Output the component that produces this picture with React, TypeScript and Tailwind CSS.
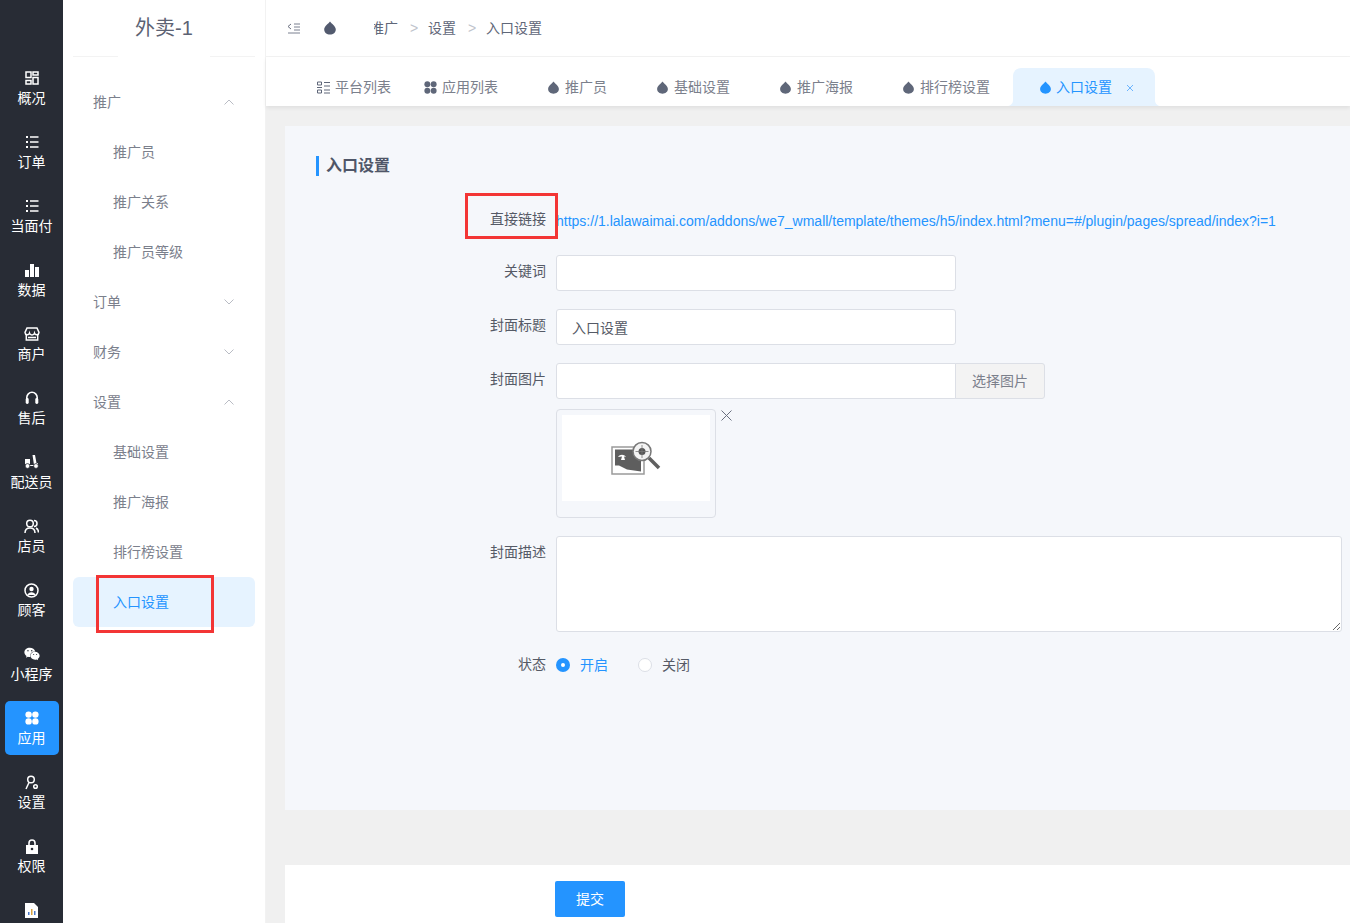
import React from "react";
import { FaWeixin } from "react-icons/fa";

const font = { fontFamily: '"Liberation Sans", "Noto Sans CJK SC", sans-serif' };

function Drop({ c = "#5f6779", s = 14 }: { c?: string; s?: number }) {
  return (
    <svg width={s} height={s} viewBox="0 0 14 14" className="shrink-0">
      <path d="M7 .6C5.6 2.6 1.2 5.4 1.2 8.6 1.2 11.6 3.8 13.6 7 13.6s5.8-2 5.8-5C12.8 5.4 8.4 2.6 7 .6z" fill={c} />
    </svg>
  );
}

function Four({ c = "#fff", s = 14 }: { c?: string; s?: number }) {
  return (
    <svg width={s} height={s} viewBox="0 0 14 14" className="shrink-0">
      <circle cx="3.6" cy="3.6" r="3.2" fill={c} />
      <circle cx="10.4" cy="3.6" r="3.2" fill={c} />
      <circle cx="3.6" cy="10.4" r="3.2" fill={c} />
      <circle cx="10.4" cy="10.4" r="3.2" fill={c} />
    </svg>
  );
}

const stroke = { fill: "none", stroke: "#fff", strokeWidth: 1.5 };

const Dash = () => (
  <svg width="14" height="14" viewBox="0 0 14 14">
    <rect x="1" y="1" width="5" height="5.5" {...stroke} />
    <rect x="8" y="1" width="5" height="3" {...stroke} />
    <rect x="1" y="9.5" width="5" height="3.5" {...stroke} />
    <rect x="8" y="6.5" width="5" height="6.5" {...stroke} />
  </svg>
);
const ListI = () => (
  <svg width="14" height="14" viewBox="0 0 14 14">
    <path d="M1 1h2v2H1zM1 6h2v2H1zM1 11h2v2H1z" fill="#fff" />
    <path d="M5 2h8.5M5 7h8.5M5 12h8.5" {...stroke} />
  </svg>
);
const Bars = () => (
  <svg width="14" height="14" viewBox="0 0 14 14">
    <path d="M0 7h4v7H0zM5 1h4v13H5zM10 4h4v10h-4z" fill="#fff" />
  </svg>
);
const Store = () => (
  <svg width="16" height="14" viewBox="0 0 16 14">
    <path d="M3 1h10l2 4.5a2.3 2.3 0 0 1-4.5.6 2.6 2.6 0 0 1-5 0A2.3 2.3 0 0 1 1 5.500z" {...stroke} />
    <path d="M2.300 7v6h11.400V7M4 10.500h8" {...stroke} />
  </svg>
);
const Head = () => (
  <svg width="14" height="14" viewBox="0 0 14 14">
    <path d="M1.800 8V6.500a5.200 5.200 0 0 1 10.400 0V8" fill="none" stroke="#fff" strokeWidth="1.600" />
    <rect x="0.700" y="7" width="3" height="6" rx="1.400" fill="#fff" />
    <rect x="10.300" y="7" width="3" height="6" rx="1.400" fill="#fff" />
  </svg>
);
const Scooter = () => (
  <svg width="15" height="14" viewBox="0 0 15 14">
    <path d="M1 4h5v5H1zM8.500 0h2.500l1.500 8H14v3H5v-1h5z" fill="#fff" />
    <circle cx="3.500" cy="11" r="2.400" fill="#fff" stroke="#282c35" strokeWidth=".8" />
    <circle cx="12" cy="11" r="2.400" fill="#fff" stroke="#282c35" strokeWidth=".8" />
  </svg>
);
const Users = () => (
  <svg width="15" height="15" viewBox="0 0 15 15">
    <circle cx="6" cy="4.500" r="3.300" {...stroke} />
    <path d="M1 14c0-3 2-5 5-5s5 2 5 5M10 1.500a3 3 0 0 1 0 6M12 9c1.500.8 2.500 2.500 2.500 4.500" {...stroke} />
  </svg>
);
const Person = () => (
  <svg width="15" height="15" viewBox="0 0 15 15">
    <circle cx="7.500" cy="7.500" r="6.500" {...stroke} />
    <circle cx="7.500" cy="6" r="2.200" fill="#fff" />
    <path d="M3.500 12c.6-2 2-2.800 4-2.800s3.400.8 4 2.800z" fill="#fff" />
  </svg>
);
const KeyI = () => (
  <svg width="14" height="15" viewBox="0 0 14 15">
    <circle cx="6" cy="4.500" r="3.300" {...stroke} />
    <path d="M4 7.500 1 14" {...stroke} />
    <circle cx="10.500" cy="11.500" r="1.800" {...stroke} />
  </svg>
);
const Lock = () => (
  <svg width="14" height="15" viewBox="0 0 14 15">
    <path d="M4 6V4a3 3 0 0 1 6 0v2" fill="none" stroke="#fff" strokeWidth="1.600" />
    <rect x="1" y="6" width="12" height="9" fill="#fff" />
    <circle cx="7" cy="10" r="1.300" fill="#282c35" />
  </svg>
);
const Doc = () => (
  <svg width="13" height="15" viewBox="0 0 13 15">
    <path d="M0 0h9l4 4v11H0z" fill="#fff" />
    <path d="M3 9h1.500v3H3z" fill="#4a78c8" />
    <path d="M6 6h1.500v6H6z" fill="#d9a441" />
    <path d="M9 8h1.500v4H9z" fill="#4a78c8" />
  </svg>
);

const rail: [string, React.ReactNode][] = [
  ["概况", <Dash />],
  ["订单", <ListI />],
  ["当面付", <ListI />],
  ["数据", <Bars />],
  ["商户", <Store />],
  ["售后", <Head />],
  ["配送员", <Scooter />],
  ["店员", <Users />],
  ["顾客", <Person />],
  ["小程序", <FaWeixin size={16} color="#fff" />],
  ["应用", <Four />],
  ["设置", <KeyI />],
  ["权限", <Lock />],
  ["", <Doc />],
];

function Chevron({ up }: { up?: boolean }) {
  return (
    <svg width="10" height="6" viewBox="0 0 10 6">
      <path d={up ? "M.5 5.500 5 1l4.500 4.500" : "M.5.500 5 5 9.500.500"} fill="none" stroke="#b9bcc4" strokeWidth="1" />
    </svg>
  );
}

const menu: { t: string; child?: boolean; up?: boolean; down?: boolean; active?: boolean }[] = [
  { t: "推广", up: true },
  { t: "推广员", child: true },
  { t: "推广关系", child: true },
  { t: "推广员等级", child: true },
  { t: "订单", down: true },
  { t: "财务", down: true },
  { t: "设置", up: true },
  { t: "基础设置", child: true },
  { t: "推广海报", child: true },
  { t: "排行榜设置", child: true },
  { t: "入口设置", child: true, active: true },
];

const GridI = () => (
  <svg width="13" height="13" viewBox="0 0 13 13" className="shrink-0">
    <path d="M.5 1h4v3h-4zM.5 9h4v3h-4z" fill="none" stroke="#5f6779" strokeWidth="1" />
    <path d="M7 1.500h6M7 5h6M7 9h6M7 12h6M0 6.500h5" stroke="#5f6779" strokeWidth="1.200" />
  </svg>
);

const tabs: { t: string; icon: React.ReactNode; cls: string }[] = [
  { t: "平台列表", icon: <GridI />, cls: "ml-[51px]" },
  { t: "应用列表", icon: <Four c="#5f6779" s={13} />, cls: "ml-[33px]" },
  { t: "推广员", icon: <Drop s={13} />, cls: "ml-[49px]" },
  { t: "基础设置", icon: <Drop s={13} />, cls: "ml-[49px]" },
  { t: "推广海报", icon: <Drop s={13} />, cls: "ml-[49px]" },
  { t: "排行榜设置", icon: <Drop s={13} />, cls: "ml-[49px]" },
];

function Row({ label, children, cls = "" }: { label: string; children: React.ReactNode; cls?: string }) {
  return (
    <div className={`flex ${cls}`}>
      <div className="w-[230px] text-right text-sm leading-[32px] text-[#555a66] shrink-0">{label}</div>
      <div className="ml-[10px] min-w-0 flex-1">{children}</div>
    </div>
  );
}

const inputCls =
  "block w-[400px] h-[36px] px-[15px] bg-white border border-[#dcdfe6] rounded-[3px] text-sm text-[#555a66] outline-none";

export default function App() {
  return (
    <div className="relative flex h-[923px] w-[1350px] overflow-hidden bg-[#f0f0f0]" style={font}>
      {/* rail */}
      <aside className="w-[63px] shrink-0 bg-[#282c35] pt-[61px] flex flex-col items-center gap-[10px]">
        {rail.map(([t, icon], i) => (
          <div
            key={i}
            className={`w-[54px] h-[54px] shrink-0 rounded-[5px] flex flex-col items-center text-white ${t === "应用" ? "bg-[#2494ff]" : ""}`}
          >
            <div className="h-[16px] mt-[9px] flex items-center justify-center">{icon}</div>
            <div className="text-sm leading-[20px] mt-[2px] whitespace-nowrap">{t}</div>
          </div>
        ))}
      </aside>

      {/* sub sidebar */}
      <aside className="w-[202px] shrink-0 bg-white flex flex-col">
        <div className="relative mx-[10px] h-[57px] shrink-0 border-b border-[#f3f3f3] flex items-center justify-center text-[20px] text-[#5c6273]">
          外卖-1
          <div className="absolute left-[45px] top-[56px] w-[92px] h-[2px] bg-white" />
        </div>
        <nav className="mt-[20px] mx-[10px] flex flex-col">
          {menu.map((m) => (
            <div
              key={m.t + (m.child ? "c" : "")}
              className={`h-[50px] flex items-center justify-between pr-[21px] text-sm rounded-[6px] ${m.child ? "pl-[40px]" : "pl-[20px]"} ${m.active ? "bg-[#e6f3ff] text-[#2494ff]" : "text-[#7b808c]"}`}
            >
              <span>{m.t}</span>
              {m.up && <Chevron up />}
              {m.down && <Chevron />}
            </div>
          ))}
        </nav>
      </aside>

      {/* main */}
      <main className="flex-1 min-w-0 flex flex-col border-l border-[#f2f2f2]">
        <header className="h-[57px] shrink-0 bg-white border-b border-[#f3f3f3] flex items-center text-sm text-[#5f6779]">
          <svg width="14" height="12" viewBox="0 0 14 12" className="ml-[21px] shrink-0">
            <path d="M4 2 1 4.500 4 7" fill="none" stroke="#6a7080" strokeWidth="1" />
            <path d="M7 2h6M7 5h6M7 8h6M1 11h12" stroke="#7a8090" strokeWidth="1" />
          </svg>
          <span className="ml-[22px]">
            <Drop c="#525a6e" s={14} />
          </span>
          <div className="ml-[37px] w-[24px] overflow-hidden flex justify-end whitespace-nowrap">
            <span className="shrink-0">推广</span>
          </div>
          <span className="ml-[12px] text-[#c0c4cc] w-[8px]">&gt;</span>
          <span className="ml-[10px]">设置</span>
          <span className="ml-[12px] text-[#c0c4cc] w-[8px]">&gt;</span>
          <span className="ml-[10px]">入口设置</span>
        </header>

        <div className="relative z-10 h-[49px] shrink-0 bg-white shadow-[0_2px_4px_rgba(0,0,0,0.07)] flex items-end text-sm text-[#7b808c]">
          {tabs.map((x) => (
            <div key={x.t} className={`h-[38px] flex items-center gap-[5px] ${x.cls}`}>
              {x.icon}
              <span className="whitespace-nowrap">{x.t}</span>
            </div>
          ))}
          <div className="relative ml-[23px] w-[142px] h-[38px] rounded-t-[8px] bg-[#e6f3ff] flex items-center pl-[26px] text-[#2494ff]">
            <Drop c="#2494ff" s={13} />
            <span className="ml-[4px] whitespace-nowrap">入口设置</span>
            <svg width="8" height="8" viewBox="0 0 8 8" className="ml-[14px] mt-[2px]">
              <path d="M1 1l6 6M7 1 1 7" stroke="#6bb4ff" strokeWidth="1" />
            </svg>
            <svg width="6" height="6" viewBox="0 0 6 6" className="absolute left-[-6px] bottom-0">
              <path d="M6 0v6H0c3 0 6-2 6-6z" fill="#e6f3ff" />
            </svg>
            <svg width="6" height="6" viewBox="0 0 6 6" className="absolute right-[-6px] bottom-0">
              <path d="M0 0v6h6C3 6 0 4 0 0z" fill="#e6f3ff" />
            </svg>
          </div>
        </div>

        <div className="flex-1 min-h-0 pl-[19px] pt-[20px]">
          <section className="h-[684px] bg-[#f5f7fb] pl-[31px] pt-[30px]">
            <h2 className="h-[20px] border-l-[3px] border-[#2494ff] pl-[7px] text-base leading-[20px] font-bold text-[#4f5668]">
              入口设置
            </h2>

            <Row label="直接链接" cls="mt-[27px] h-[36px]">
              <div className="text-sm leading-[36px] text-[#2494ff] whitespace-nowrap">
                https://1.lalawaimai.com/addons/we7_wmall/template/themes/h5/index.html?menu=#/plugin/pages/spread/index?i=1
              </div>
            </Row>
            <Row label="关键词" cls="mt-[16px]">
              <input className={inputCls} />
            </Row>
            <Row label="封面标题" cls="mt-[18px]">
              <input className={inputCls} defaultValue="入口设置" />
            </Row>
            <Row label="封面图片" cls="mt-[18px]">
              <div className="flex">
                <input className={`${inputCls} rounded-r-none`} />
                <div className="w-[90px] h-[36px] -ml-px bg-[#f3f3f3] border border-[#dcdfe6] rounded-r-[3px] flex items-center justify-center text-sm text-[#7b808c]">
                  选择图片
                </div>
              </div>
              <div className="relative mt-[10px] w-[160px] h-[109px] border border-[#dcdfe6] rounded-[4px] p-[5px]">
                <div className="h-[86px] bg-white flex items-center justify-center">
                  <svg width="50" height="34" viewBox="0 0 50 34">
                    <rect x="1" y="6" width="32" height="27" fill="none" stroke="#9a9a9a" strokeWidth="1.500" />
                    <path d="M4 8.500h26v22l-14-2-8-4H4z" fill="#5e5e5e" />
                    <path d="M7 16c2-3 6-3 8 0l-2-.5 1 3.500h-4l1-3.500z" fill="#fff" />
                    <circle cx="31" cy="10.500" r="9" fill="#f3f3f3" stroke="#777" strokeWidth="1.500" />
                    <circle cx="31" cy="10.500" r="3.500" fill="#555" />
                    <path d="M31 4v13M24.500 10.500h13" stroke="#777" strokeWidth=".8" />
                    <path d="M38 17l10 10" stroke="#606060" strokeWidth="3.500" />
                  </svg>
                </div>
                <svg width="11" height="11" viewBox="0 0 11 11" className="absolute left-[164px] top-[0px]">
                  <path d="M.5.500l10 10M10.500.500l-10 10" stroke="#6a7080" strokeWidth="1" />
                </svg>
              </div>
            </Row>
            <Row label="封面描述" cls="mt-[18px]">
              <textarea className="block w-[786px] h-[96px] bg-white border border-[#dcdfe6] rounded-[3px] outline-none" />
            </Row>
            <Row label="状态" cls="mt-[16px] h-[36px]">
              <div className="flex items-center h-[36px] text-sm -mt-px">
                <span className="w-[14px] h-[14px] rounded-full bg-[#2494ff] flex items-center justify-center">
                  <span className="w-[4px] h-[4px] rounded-full bg-white" />
                </span>
                <span className="ml-[10px] text-[#2494ff]">开启</span>
                <span className="ml-[30px] w-[14px] h-[14px] rounded-full bg-white border border-[#dcdfe6]" />
                <span className="ml-[10px] text-[#555a66]">关闭</span>
              </div>
            </Row>
          </section>

          <div className="mt-[55px] h-[100px] bg-white pl-[270px] pt-[16px]">
            <button className="w-[70px] h-[36px] bg-[#2494ff] rounded-[2px] text-white text-sm">提交</button>
          </div>
        </div>
      </main>

      {/* annotations */}
      <div className="absolute left-[96px] top-[575px] w-[118px] h-[58px] border-[3px] border-[#f33535]" />
      <div className="absolute left-[465px] top-[193px] w-[93px] h-[46px] border-[3px] border-[#f33535]" />
    </div>
  );
}
